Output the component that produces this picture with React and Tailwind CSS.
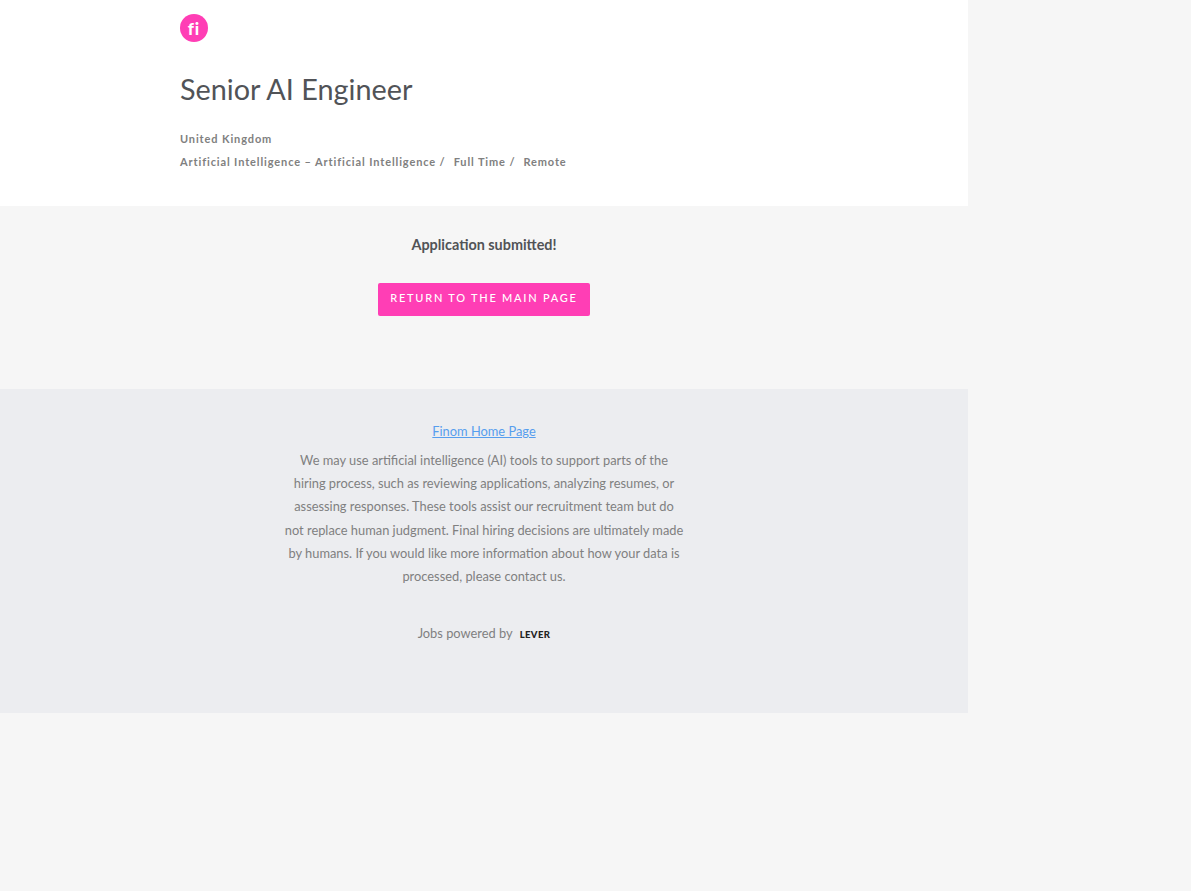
export default function App() {
  return (
    <div className="min-h-[891px] bg-[#f6f6f6] font-['Lato','Noto_Sans',sans-serif] text-[#515357]">
      <div className="w-[968px]">
        <header className="h-[206px] bg-white pl-[180px] pt-[14px]">
          <div className="flex h-7 w-7 items-center justify-center rounded-full bg-[#ff3eb5]">
            <span className="text-[17px] font-black leading-none tracking-[1px] text-white [font-variant-ligatures:none]">fi</span>
          </div>
          <h2 className="mt-[27px] text-[28.8px] leading-[40px] text-[#515357]">Senior AI Engineer</h2>
          <div className="mt-[18px] text-[11px] font-bold leading-[23px] tracking-[0.88px] text-[#808080]">
            <div>United Kingdom</div>
            <div className="flex">
              <span>Artificial Intelligence – Artificial Intelligence /</span>
              <span className="ml-2">Full Time /</span>
              <span className="ml-2">Remote</span>
            </div>
          </div>
        </header>
        <main className="flex h-[183px] flex-col items-center pt-[29px]">
          <p className="text-[14.4px] font-bold leading-5 text-[#515357]">Application submitted!</p>
          <a className="mt-[28px] flex h-[33px] w-[212px] items-center justify-center rounded-[2px] bg-[#ff3eb5] pb-[2px] text-[11px] font-medium uppercase tracking-[1.75px] text-white">
            Return to the main page
          </a>
        </main>
        <footer className="flex h-[324px] flex-col items-center bg-[#ecedf0] pt-[31px] text-[12.85px] text-[#808080]">
          <a className="leading-[23px] text-[#579eee] underline">Finom Home Page</a>
          <p className="mt-[6px] w-[400px] text-center leading-[23.2px]">
            We may use artificial intelligence (AI) tools to support parts of the hiring process, such as reviewing applications, analyzing resumes, or assessing responses. These tools assist our recruitment team but do not replace human judgment. Final hiring decisions are ultimately made by humans. If you would like more information about how your data is processed, please contact us.
          </p>
          <div className="mt-[33px] flex items-center gap-[7px] leading-5">
            <span>Jobs powered by</span>
            <span className="pt-[4px] text-[9.5px] font-black tracking-[0.4px] text-[#222]">LEVER</span>
          </div>
        </footer>
      </div>
    </div>
  );
}
